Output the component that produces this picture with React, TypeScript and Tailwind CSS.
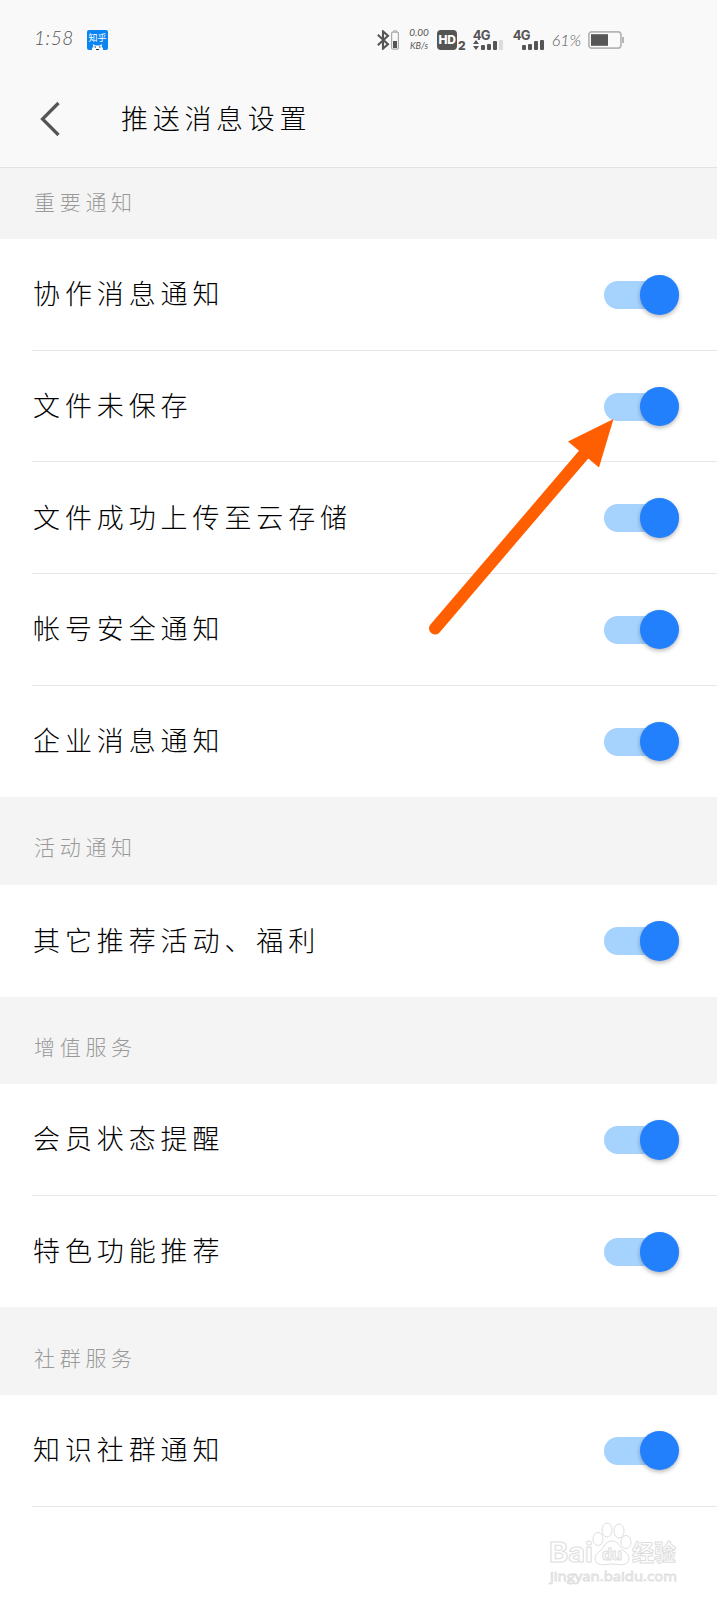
import type { ReactNode } from "react";

type Section = {
  title: string;
  items: string[];
};

const sections: Section[] = [
  {
    title: "重要通知",
    items: ["协作消息通知", "文件未保存", "文件成功上传至云存储", "帐号安全通知", "企业消息通知"],
  },
  { title: "活动通知", items: ["其它推荐活动、福利"] },
  { title: "增值服务", items: ["会员状态提醒", "特色功能推荐"] },
  { title: "社群服务", items: ["知识社群通知"] },
];

function Bars({ heights, faded = false }: { heights: number[]; faded?: boolean }) {
  return (
    <div className="flex items-end gap-[2px]">
      {heights.map((h, i) => (
        <span
          key={i}
          className={`w-1 rounded-[1px] ${faded && i === heights.length - 1 ? "bg-[#dcdcdc]" : "bg-[#555]"}`}
          style={{ height: h }}
        />
      ))}
    </div>
  );
}

function Signal({ children, className = "" }: { children: ReactNode; className?: string }) {
  return (
    <div className={`flex h-5 flex-col justify-between font-['Inter'] text-[13px] leading-[10px] font-bold tracking-[-0.8px] text-[#555] ${className}`}>
      <span>4G</span>
      {children}
    </div>
  );
}

function StatusBar() {
  return (
    <div className="flex h-20 items-center text-[#555]">
      <span className="-mt-1 ml-[34px] w-[53px] font-['Lato'] text-[19px] font-light tracking-[0.6px] italic">1:58</span>
      <svg className="h-5 w-[21px]" viewBox="0 0 21 20">
        <rect width="21" height="20" rx="2" fill="#0b85f2" />
        <text x="10.5" y="10.8" textAnchor="middle" fontSize="9" fill="#fff" fontFamily="Noto Sans CJK SC, sans-serif">知乎</text>
        <path d="M5 20v-2l1.500-1-.8-3 2.600 1.600h4.400l2.600-1.600-.8 3L16 18v2z" fill="#fff" />
        <path d="M7.500 17h1.500m3 0h1.500M9 19.500h3" stroke="#234" strokeWidth="1" />
      </svg>

      <svg className="ml-[269px] h-5 w-[22px]" viewBox="0 0 22 20" fill="none">
        <path d="M.8 4.800 11 14.200 6 18.600V1.400L11 5.800.8 15.200" stroke="#555" strokeWidth="2.100" />
        <path d="M16.500 2V.8h3V2" stroke="#aaa" />
        <rect x="14.600" y="2.200" width="6.800" height="17" rx="1.200" stroke="#aaa" strokeWidth="1.200" />
        <rect x="16" y="11" width="4" height="7" fill="#555" />
      </svg>
      <div className="-mt-[2px] ml-[10px] flex w-5 flex-col items-center font-['Lato'] text-[10px] leading-[13px] whitespace-nowrap italic">
        <span>0.00</span>
        <span className="text-[9px]">KB/s</span>
      </div>
      <div className="ml-2 flex h-5 items-end">
        <span className="flex h-5 w-5 items-center justify-center rounded-[4px] bg-[#555] font-['Inter'] text-[12px] font-extrabold tracking-[-0.4px] text-white">
          HD
        </span>
        <span className="ml-px font-['Inter'] text-[12px] leading-[9px] font-extrabold text-[#555]">2</span>
      </div>
      <Signal className="ml-[7px] w-[31px]">
        <div className="flex items-end gap-[2px]">
          <svg className="h-[10px] w-[6px] shrink-0" viewBox="0 0 6 10" fill="#555">
            <path d="M3 0l3 4H0zM3 10l3-4H0z" />
          </svg>
          <Bars heights={[5, 6, 9, 10]} faded />
        </div>
      </Signal>
      <Signal className="ml-[9px] w-[31px]">
        <div className="flex justify-end">
          <Bars heights={[5, 6, 9, 10]} />
        </div>
      </Signal>
      <span className="ml-2 w-[29px] font-['Lato'] text-[16px] font-light whitespace-nowrap italic">61%</span>
      <svg className="ml-[7px] h-[18px] w-9" viewBox="0 0 36 18">
        <rect x=".9" y=".9" width="32" height="16.200" rx="2.800" fill="none" stroke="#b5b5b5" strokeWidth="1.700" />
        <rect x="3" y="3.200" width="17" height="11.600" fill="#555" />
        <path d="M34 6h2v6h-2z" fill="#b5b5b5" />
      </svg>
    </div>
  );
}

function Toggle() {
  return (
    <button className="relative h-10 w-[75px]" role="switch" aria-checked="true">
      <span className="absolute top-[6px] left-0 h-7 w-[60px] rounded-full bg-[#a6d2fe]" />
      <span className="absolute top-0 right-0 size-[39.5px] rounded-full bg-[#2380fd] shadow-[0_2px_4px_rgba(0,0,0,0.28)]" />
    </button>
  );
}

function Watermark() {
  return (
    <svg className="absolute top-[1520px] left-[546px] h-[66px] w-[140px]" viewBox="0 0 140 66" fill="#fff" stroke="#dedede">
      <g fontFamily="Inter, 'Noto Sans CJK SC', sans-serif" fontWeight="700">
        <text x="3" y="42" fontSize="27" textLength="44" lengthAdjust="spacingAndGlyphs">Bai</text>
        <path d="M66 21c-7 0-8 7-12 10-6 4-6 9-3 12 4 3 10 1 15 1s11 2 15-1c3-3 3-8-3-12-4-3-5-10-12-10z" />
        <ellipse cx="52" cy="19" rx="5" ry="6.5" />
        <ellipse cx="61" cy="10" rx="5" ry="7" />
        <ellipse cx="73" cy="11" rx="5" ry="7" />
        <ellipse cx="80" cy="22" rx="5" ry="6.5" />
        <text x="56" y="40" fontSize="16" textLength="20" lengthAdjust="spacingAndGlyphs">du</text>
        <text x="86" y="41" fontSize="23" textLength="44" lengthAdjust="spacingAndGlyphs">经验</text>
      </g>
      <text x="4" y="61" fontSize="13" fontFamily="Open Sans, sans-serif" strokeWidth=".8" textLength="127" lengthAdjust="spacingAndGlyphs">
        jingyan.baidu.com
      </text>
    </svg>
  );
}

export default function App() {
  return (
    <div className="relative h-[1600px] w-[717px] overflow-hidden bg-white font-['Noto_Sans_CJK_SC',sans-serif]">
      <header className="h-[168px] border-b border-[#e2e2e2] bg-[#f9f9f9]">
        <StatusBar />
        <div className="flex h-[78px] items-center">
          <svg className="ml-10 h-9 w-5" viewBox="0 0 20 36" fill="none">
            <path d="M18.500 2 2.500 18l16 16" stroke="#555" strokeWidth="3.200" />
          </svg>
          <h1 className="-mt-[2px] ml-[61px] text-[27px] font-light tracking-[4.7px] text-black">推送消息设置</h1>
        </div>
      </header>

      {sections.map((section, idx) => (
        <section key={section.title}>
          <h2
            className={`flex items-center bg-[#f4f4f4] pl-[34px] text-[21px] font-light tracking-[4.7px] text-[#999] ${
              idx === 0 ? "h-[71.3px] pb-1" : "h-[87.7px] pt-3"
            }`}
          >
            {section.title}
          </h2>
          {section.items.map((item, i) => (
            <div
              key={item}
              className={`ml-8 flex h-[111.6px] items-center justify-between pt-px pr-[38px] ${
                i < section.items.length - 1 || idx === sections.length - 1 ? "border-b border-[#e8e8e8]" : ""
              }`}
            >
              <span className="-mt-[3px] ml-px text-[27px] font-light tracking-[4.9px] text-black">{item}</span>
              <Toggle />
            </div>
          ))}
        </section>
      ))}

      {/* pointer to the second switch */}
      <svg className="absolute top-[410px] left-[420px] h-[230px] w-[200px]" viewBox="0 0 200 230">
        <path d="M15 218.500 165 43" stroke="#ff5f00" strokeWidth="12" strokeLinecap="round" />
        <path d="M193.500 9 148 31.500 179 57.500z" fill="#ff5f00" />
      </svg>

      <Watermark />
    </div>
  );
}
